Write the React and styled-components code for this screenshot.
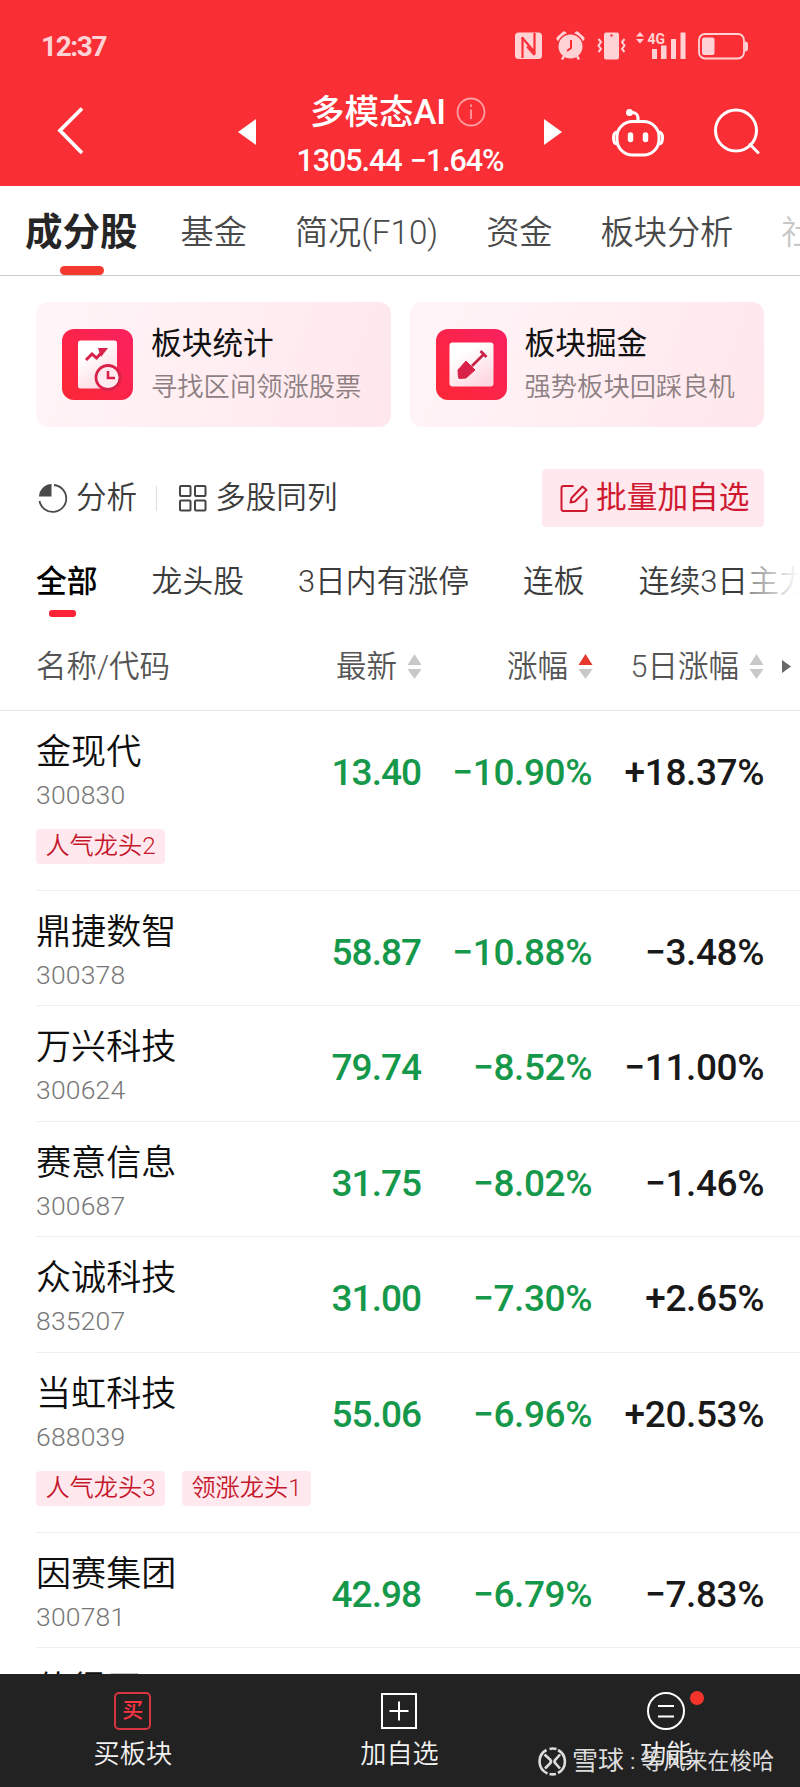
import React from "react";
import styled, { createGlobalStyle } from "styled-components";

const GlobalStyle = createGlobalStyle`
  * {
    box-sizing: border-box;
  }

  body {
    margin: 0;
    background: #fff;
    font-family: Roboto, "Noto Sans CJK SC", sans-serif;
  }

  svg {
    display: block;
    flex: none;
  }
`;

const Screen = styled.div`
  width: 800px;
  height: 1787px;
  display: flex;
  flex-direction: column;
  overflow: hidden;
  position: relative;
  background: #fff;
  white-space: nowrap;
`;

const Header = styled.header`
  height: 186px;
  flex: none;
  background: #fa2e35;
  color: #fff;
`;

const StatusBar = styled.div`
  height: 92px;
  padding: 0 52px 0 41px;
  display: flex;
  align-items: center;
  justify-content: space-between;
  color: #ffd3d6;
`;

const Clock = styled.span`
  font-size: 28px;
  font-weight: 700;
  letter-spacing: -1.4px;
`;

const StatusIcons = styled.div`
  display: flex;
  align-items: center;
`;

const NavBar = styled.div`
  height: 94px;
  display: grid;
  grid-template-columns: 238px 324px 238px;
`;

const NavSide = styled.div`
  display: flex;
  align-items: flex-start;
  padding: ${props => props.$pad};
  gap: 50px;
`;

const NavCenter = styled.div`
  display: flex;
  justify-content: space-between;

  > svg {
    margin-top: 27px;
  }
`;

const TitleBlock = styled.div`
  display: flex;
  flex-direction: column;
  align-items: center;
`;

const Title = styled.div`
  display: flex;
  align-items: center;
  gap: 10px;
  height: 42px;
  margin: -1px 4px 0 0;
  font-size: 34.5px;
  font-weight: 500;
  line-height: 42px;
`;

const IndexLine = styled.div`
  margin-top: 10px;
  font-size: 30.5px;
  font-weight: 500;
  line-height: 36px;
  letter-spacing: -1.1px;
  word-spacing: 2px;
`;

const Tabs = styled.nav`
  height: 90px;
  flex: none;
  padding-left: 25px;
  display: flex;
  align-items: center;
  gap: 48px;
  border-bottom: 1px solid #ccc;
  color: #4a4a4a;
  overflow: hidden;
`;

const Tab = styled.span`
  position: relative;
  height: 89px;
  flex: none;
  font-size: ${props => (props.$active ? 37.5 : 33.2)}px;
  font-weight: ${props => (props.$active ? 700 : 350)};
  color: ${props => (props.$active ? "#262626" : "inherit")};
  margin-right: ${props => (props.$active ? -5 : 0)}px;
  line-height: 93px;
  opacity: ${props => (props.$faded ? 0.3 : 1)};
`;

const TabMark = styled.i`
  position: absolute;
  left: 50%;
  bottom: 0;
  width: 44px;
  height: 9px;
  margin-left: -21px;
  border-radius: 5px;
  background: #f5392f;
`;

const Cards = styled.div`
  display: grid;
  grid-template-columns: 1fr 1fr;
  gap: 19px;
  padding: 26px 36px 0;
  flex: none;
`;

const Card = styled.div`
  height: 125px;
  padding: 0 0 0 26px;
  display: flex;
  align-items: center;
  gap: 18px;
  border-radius: 12px;
  background: linear-gradient(110deg, #fff5f8, #ffecf0 65%, #ffe7ec);
`;

const CardTitle = styled.div`
  padding-top: 1px;
  font-size: 30.7px;
  line-height: 44px;
  color: #111;
`;

const CardText = styled.div`
  font-size: 26.3px;
  font-weight: 350;
  line-height: 43px;
  color: #8d8083;
`;

const Toolbar = styled.div`
  height: 58px;
  flex: none;
  margin: 42px 36px 0;
  display: flex;
  align-items: center;
  justify-content: space-between;
`;

const Tools = styled.div`
  display: flex;
  align-items: center;
`;

const Tool = styled.div`
  display: flex;
  align-items: center;
  gap: 8px;
  font-size: 30.6px;
  font-weight: 350;
  line-height: 40px;
  color: #3c3c3c;
`;

const Divider = styled.i`
  width: 1px;
  height: 25px;
  margin: 0 21px 0 19px;
  background: #ddd;
`;

const AddButton = styled.button`
  width: 222px;
  height: 58px;
  padding: 0 0 0 17px;
  display: flex;
  align-items: center;
  gap: 7px;
  border: 0;
  border-radius: 4px;
  background: #ffe9ee;
  color: #cf1930;
  font-family: inherit;
  font-size: 30.7px;
  line-height: 40px;
`;

const Filters = styled.div`
  position: relative;
  height: 108px;
  flex: none;
  display: flex;
  align-items: center;
  gap: 54px;
  padding-left: 36px;
  overflow: hidden;
`;

const Filter = styled.span`
  position: relative;
  flex: none;
  font-size: 30.8px;
  font-weight: ${props => (props.$active ? 500 : 350)};
  line-height: 70px;
  padding-top: 1px;
  color: ${props => (props.$active ? "#000" : "#3c3c3c")};
`;

const FilterMark = styled.i`
  position: absolute;
  left: 13px;
  bottom: 0;
  width: 27px;
  height: 7px;
  border-radius: 3px;
  background: #fa2338;
`;

const Fade = styled.i`
  position: absolute;
  top: 0;
  right: 0;
  width: 53px;
  height: 100%;
  background: linear-gradient(90deg, rgba(255, 255, 255, 0.4), #fff);
`;

const TableHead = styled.div`
  height: 76px;
  flex: none;
  padding: 0 9px 12px 36px;
  display: grid;
  grid-template-columns: 386px 171px 171px 1fr;
  align-items: center;
  border-bottom: 1px solid #e6e6e6;
  font-size: 30.5px;
  font-weight: 350;
  line-height: 40px;
  color: #555;
`;

const HeadFirst = styled.div`
  display: flex;
  justify-content: space-between;
`;

const HeadCell = styled.div`
  display: flex;
  align-items: center;
  justify-content: flex-end;
  gap: 10px;
`;

const More = styled.div`
  display: flex;
  justify-content: flex-end;
`;

const Rows = styled.div`
  flex: 1;
  min-height: 0;
  overflow: hidden;
`;

const StockRow = styled.div`
  height: ${props => (props.$tagged ? 179.6 : 115.6)}px;
  margin-left: 36px;
  padding-right: 36px;
  display: grid;
  grid-template-columns: 1fr 130px 171px 172px;
  grid-template-rows: 102px auto;
  border-bottom: 1px solid #eee;
`;

const Name = styled.div`
  padding-top: 19px;
  font-size: 35.1px;
  font-weight: 350;
  line-height: 44px;
  color: #0e0e0e;
`;

const Code = styled.div`
  font-size: 26.5px;
  font-weight: 300;
  line-height: 42px;
  letter-spacing: 0.2px;
  color: #777;
`;

const Value = styled.div`
  padding-top: 39px;
  font-size: 37px;
  font-weight: 500;
  line-height: 45px;
  letter-spacing: ${props => (props.$price ? -1 : -0.4)}px;
  text-align: right;
  color: ${props => (props.$green ? "#16984b" : "#191919")};
`;

const Tags = styled.div`
  grid-column: 1 / 5;
  display: flex;
  align-items: flex-start;
  gap: 17px;
  padding-top: 16px;
`;

const Tag = styled.span`
  width: 129px;
  height: 35px;
  border-radius: 4px;
  background: #ffe9ee;
  font-size: 24.2px;
  font-weight: 350;
  line-height: 35px;
  text-align: center;
  color: #c5162c;
`;

const BottomBar = styled.footer`
  position: relative;
  height: 113px;
  flex: none;
  display: grid;
  grid-template-columns: repeat(3, 1fr);
  background: #222;
`;

const BottomItem = styled.div`
  display: flex;
  flex-direction: column;
  align-items: center;
  padding: 18px 1px 0 0;
  color: #f2f2f2;
  font-size: 26.2px;
  font-weight: 350;
  line-height: 44px;

  > div {
    margin-bottom: 2px;
  }
`;

const IconBox = styled.div`
  position: relative;
  height: 38px;
`;

const BuyIcon = styled.div`
  width: 37px;
  height: 38px;
  border: 2.5px solid #d8343f;
  border-radius: 5px;
  color: #fb3442;
  font-size: 21px;
  font-weight: 500;
  line-height: 33px;
  text-align: center;
`;

const RedDot = styled.i`
  position: absolute;
  left: 43px;
  top: -1px;
  width: 14px;
  height: 14px;
  border-radius: 50%;
  background: #f5352c;
`;

const Watermark = styled.div`
  position: absolute;
  left: 538px;
  top: 70px;
  display: flex;
  align-items: center;
  color: #dcdcdc;
  font-size: 22.2px;
  line-height: 34px;
`;

const Brand = styled.span`
  width: 58px;
  margin-left: 5px;
  font-size: 26px;
`;

const Colon = styled.span`
  width: 12px;
  margin-right: -1px;
`;

const stocks = [
  { name: "金现代", code: "300830", price: "13.40", change: "−10.90%", five: "+18.37%", tags: ["人气龙头2"] },
  { name: "鼎捷数智", code: "300378", price: "58.87", change: "−10.88%", five: "−3.48%" },
  { name: "万兴科技", code: "300624", price: "79.74", change: "−8.52%", five: "−11.00%" },
  { name: "赛意信息", code: "300687", price: "31.75", change: "−8.02%", five: "−1.46%" },
  { name: "众诚科技", code: "835207", price: "31.00", change: "−7.30%", five: "+2.65%" },
  { name: "当虹科技", code: "688039", price: "55.06", change: "−6.96%", five: "+20.53%", tags: ["人气龙头3", "领涨龙头1"] },
  { name: "因赛集团", code: "300781", price: "42.98", change: "−6.79%", five: "−7.83%" },
  { name: "值得买" }
];

const StatusGlyphs = () => (
  <svg width="236" height="30" viewBox="512 31 236 30" fill="currentColor">
    {/* nfc */}
    <rect x="515" y="32.500" width="27" height="26.500" rx="3.500" />
    <path d="M522.500 58V37" fill="none" stroke="#fa2e35" strokeWidth="2.200" />
    <path d="M522 37.500l12.500 14.500V33" fill="none" stroke="#fa2e35" strokeWidth="2.200" />
    <path d="M527 46.500l7.500 8.500" fill="none" stroke="#fa2e35" strokeWidth="2" />
    {/* alarm */}
    <path d="M559 38.500l5-4.500M582 38.500l-5-4.500" stroke="currentColor" strokeWidth="5" strokeLinecap="round" />
    <circle cx="570.500" cy="46.500" r="12.700" stroke="#fa2e35" strokeWidth="1.400" />
    <path d="M564 56l-2 3.500M577 56l2 3.500" stroke="currentColor" strokeWidth="2.500" />
    <path d="M571 40v8l-4 3" fill="none" stroke="#fa2e35" strokeWidth="2" />
    {/* vibrate */}
    <rect x="604" y="32.500" width="15" height="27" rx="2" />
    <circle cx="611.500" cy="35.500" r="1.200" fill="#fa2e35" />
    <path d="M598.500 39l2.500 3-2.500 3.500 2.500 3.500-2.500 3M624.500 39l-2.500 3 2.500 3.500-2.500 3.500 2.500 3" fill="none" stroke="currentColor" strokeWidth="2" />
    {/* mobile signal */}
    <path d="M640 32l4 4.500h-8zM640 43.500l4-4.500h-8z" />
    <text x="647.500" y="43.500" fontSize="15.500" fontWeight="700" textLength="17.500" lengthAdjust="spacingAndGlyphs">4G</text>
    <path d="M652 49h5v10h-5zM661 45.500h5.500V59H661zM671 39h5v20h-5zM680.500 32.500h5V59h-5z" />
    {/* battery */}
    <rect x="699" y="34" width="45" height="24.500" rx="6" fill="none" stroke="currentColor" strokeWidth="1.800" />
    <rect x="702" y="37.500" width="12.500" height="17.500" rx="2" />
    <path d="M745 41.500q3 0 3 3v4q0 3-3 3z" />
  </svg>
);

const BackIcon = () => (
  <svg width="30" height="50" viewBox="0 0 30 50" fill="none" stroke="#fff" strokeWidth="3.800">
    <path d="M26 2.500L4 24.500l22 22.500" />
  </svg>
);

const Triangle = ({ left }) => (
  <svg width="18" height="26" viewBox="0 0 18 26" fill="#fff">
    <path d={left ? "M18 0v26L0 13z" : "M0 0v26l18-13z"} />
  </svg>
);

const InfoIcon = () => (
  <svg width="30" height="30" viewBox="0 0 30 30" fill="none" stroke="#ff9da1" strokeWidth="1.800">
    <circle cx="15" cy="15" r="13.500" />
    <path d="M15 12.500V22M15 7.500v2.500" />
  </svg>
);

const RobotIcon = () => (
  <svg width="52" height="50" viewBox="0 0 52 50" fill="none" stroke="#fff" strokeWidth="3">
    <rect x="5" y="13.500" width="42" height="33.500" rx="15.500" />
    <path d="M5.500 24q-4 0-4 6t4 6M46.500 24q4 0 4 6t-4 6" />
    <path d="M26 13q1-9-7-8.500" strokeWidth="3" />
    <circle cx="17.500" cy="4.500" r="3.500" fill="#fff" stroke="none" />
    <path d="M18.500 27v4.500M33.500 27v4.500" strokeWidth="5.500" strokeLinecap="round" />
  </svg>
);

const SearchIcon = () => (
  <svg width="46" height="46" viewBox="0 0 46 46" fill="none" stroke="#fff" strokeWidth="3">
    <circle cx="22" cy="22.500" r="20.500" />
    <path d="M36 36.500l8 8" strokeLinecap="round" />
  </svg>
);

const StatsIcon = () => (
  <svg width="71" height="71" viewBox="0 0 71 71">
    <defs>
      <linearGradient id="tile" x1="0" y1="1" x2="1" y2="0">
        <stop offset="0" stopColor="#fc2734" />
        <stop offset="1" stopColor="#fb2161" />
      </linearGradient>
      <linearGradient id="paper" x1="0" y1="0" x2="0.6" y2="1">
        <stop offset="0.3" stopColor="#fff" />
        <stop offset="1" stopColor="#ffd9e1" />
      </linearGradient>
    </defs>
    <rect width="71" height="71" rx="12" fill="url(#tile)" />
    <rect x="16" y="11.500" width="39" height="48" rx="2.500" fill="url(#paper)" />
    <path d="M24 31l6-6 4.500 4 6.500-7" fill="none" stroke="#d92249" strokeWidth="3" />
    <path d="M36 19h10l-7 9z" fill="#d92249" />
    <circle cx="46" cy="48.500" r="12" fill="#ffeaf0" stroke="#d92249" strokeWidth="2.800" />
    <path d="M46 42v7h7" fill="none" stroke="#d92249" strokeWidth="2.600" />
  </svg>
);

const DigIcon = () => (
  <svg width="71" height="71" viewBox="0 0 71 71">
    <rect width="71" height="71" rx="12" fill="url(#tile)" />
    <rect x="13.500" y="13.500" width="44" height="44" rx="3" fill="url(#paper)" />
    <path d="M36 37l12-12M44.500 22l6 6" stroke="#c92249" strokeWidth="2.800" fill="none" />
    <path d="M30 32l9 9-9 8-7 .5q-1-2-1-8.500z" fill="#d92249" stroke="#d92249" strokeLinejoin="round" />
  </svg>
);

const PieIcon = () => (
  <svg width="32" height="32" viewBox="0 0 32 32" fill="none" stroke="#4a4a4a" strokeWidth="1.800">
    <path d="M18 3a13.500 13.500 0 1 1-14.500 16" />
    <path d="M15.500 2v12.500H3A13 13 0 0 1 15.500 2z" fill="#4a4a4a" stroke="none" />
  </svg>
);

const GridIcon = () => (
  <svg width="29" height="28" viewBox="0 0 29 28" fill="none" stroke="#444" strokeWidth="2">
    <rect x="2" y="2" width="10.500" height="10" rx="1" />
    <rect x="17" y="2" width="10.500" height="10" rx="1" />
    <rect x="2" y="16.500" width="10.500" height="10" rx="1" />
    <rect x="17" y="16.500" width="10.500" height="10" rx="1" />
  </svg>
);

const EditIcon = () => (
  <svg width="30" height="30" viewBox="0 0 30 30" fill="none" stroke="currentColor" strokeWidth="2" strokeLinejoin="round">
    <path d="M14.500 3H4.500Q2.500 3 2.500 5v21q0 2 2 2h21q2 0 2-2V15.500" />
    <path d="M11.500 19.500l1-4.500L23.500 3.500l4 3.500L16 18.500z" />
  </svg>
);

const Sorter = ({ up }) => (
  <svg width="15" height="26" viewBox="0 0 15 26" fill="#c8c8c8">
    <path d="M7.500 0l7 11H.5z" fill={up ? "#e8372f" : "#c8c8c8"} />
    <path d="M.5 15h14l-7 10z" />
  </svg>
);

const SnowballLogo = () => (
  <svg width="29" height="29" viewBox="0 0 29 29" fill="none" stroke="currentColor" strokeWidth="2.600">
    <path d="M8.500 3A13 13 0 0 0 9.500 26.500M20 26A13 13 0 0 0 20 3M11.500 1.900a13 13 0 0 1 7 .2M11.500 27a13 13 0 0 0 6.500 0" />
    <path d="M6.500 7.500l5.500 5q2 2 0 4L7 21.500M22 7.500l-4.500 5q-2 2 0 4l4.500 5" />
  </svg>
);

const Stock = ({ name, code, price, change, five, tags }) => (
  <StockRow $tagged={tags}>
    <div>
      <Name>{name}</Name>
      <Code>{code}</Code>
    </div>
    <Value $green $price>{price}</Value>
    <Value $green>{change}</Value>
    <Value>{five}</Value>
    {tags && (
      <Tags>
        {tags.map(tag => <Tag key={tag}>{tag}</Tag>)}
      </Tags>
    )}
  </StockRow>
);

const App = () => (
  <Screen>
    <GlobalStyle />
    <Header>
      <StatusBar>
        <Clock>12:37</Clock>
        <StatusIcons><StatusGlyphs /></StatusIcons>
      </StatusBar>
      <NavBar>
        <NavSide $pad="14px 0 0 56px"><BackIcon /></NavSide>
        <NavCenter>
          <Triangle left />
          <TitleBlock>
            <Title>多模态AI <InfoIcon /></Title>
            <IndexLine>1305.44 −1.64%</IndexLine>
          </TitleBlock>
          <Triangle />
        </NavCenter>
        <NavSide $pad="16px 0 0 50px"><RobotIcon /><SearchIcon /></NavSide>
      </NavBar>
    </Header>

    <Tabs>
      <Tab $active>成分股<TabMark /></Tab>
      <Tab>基金</Tab>
      <Tab>简况(F10)</Tab>
      <Tab>资金</Tab>
      <Tab>板块分析</Tab>
      <Tab $faded>社区</Tab>
    </Tabs>

    <Cards>
      <Card>
        <StatsIcon />
        <div>
          <CardTitle>板块统计</CardTitle>
          <CardText>寻找区间领涨股票</CardText>
        </div>
      </Card>
      <Card>
        <DigIcon />
        <div>
          <CardTitle>板块掘金</CardTitle>
          <CardText>强势板块回踩良机</CardText>
        </div>
      </Card>
    </Cards>

    <Toolbar>
      <Tools>
        <Tool><PieIcon />分析</Tool>
        <Divider />
        <Tool><GridIcon />多股同列</Tool>
      </Tools>
      <AddButton><EditIcon />批量加自选</AddButton>
    </Toolbar>

    <Filters>
      <Filter $active>全部<FilterMark /></Filter>
      <Filter>龙头股</Filter>
      <Filter>3日内有涨停</Filter>
      <Filter>连板</Filter>
      <Filter>连续3日主力</Filter>
      <Fade />
    </Filters>

    <TableHead>
      <HeadFirst>
        <span>名称/代码</span>
        <HeadCell>最新<Sorter /></HeadCell>
      </HeadFirst>
      <HeadCell>涨幅<Sorter up /></HeadCell>
      <HeadCell>5日涨幅<Sorter /></HeadCell>
      <More>
        <svg width="9" height="13" viewBox="0 0 9 13" fill="#666"><path d="M0 0v13l9-6.500z" /></svg>
      </More>
    </TableHead>

    <Rows>
      {stocks.map(stock => <Stock key={stock.name} {...stock} />)}
    </Rows>

    <BottomBar>
      <BottomItem>
        <BuyIcon>买</BuyIcon>
        买板块
      </BottomItem>
      <BottomItem>
        <IconBox>
          <svg width="38" height="38" viewBox="0 0 38 38" fill="none" stroke="#fff" strokeWidth="2">
            <path d="M2 2h34v34H2zM19 9.500v19M9.500 19h19" />
          </svg>
        </IconBox>
        加自选
      </BottomItem>
      <BottomItem>
        <IconBox>
          <svg width="38" height="38" viewBox="0 0 38 38" fill="none" stroke="#fff" strokeWidth="2">
            <circle cx="19" cy="19" r="18" />
            <path d="M11 14h16M11 24.500h16" />
          </svg>
          <RedDot />
        </IconBox>
        功能
      </BottomItem>
      <Watermark>
        <SnowballLogo />
        <Brand>雪球</Brand>
        <Colon>:</Colon>
        等风来在梭哈
      </Watermark>
    </BottomBar>
  </Screen>
);

export default App;
